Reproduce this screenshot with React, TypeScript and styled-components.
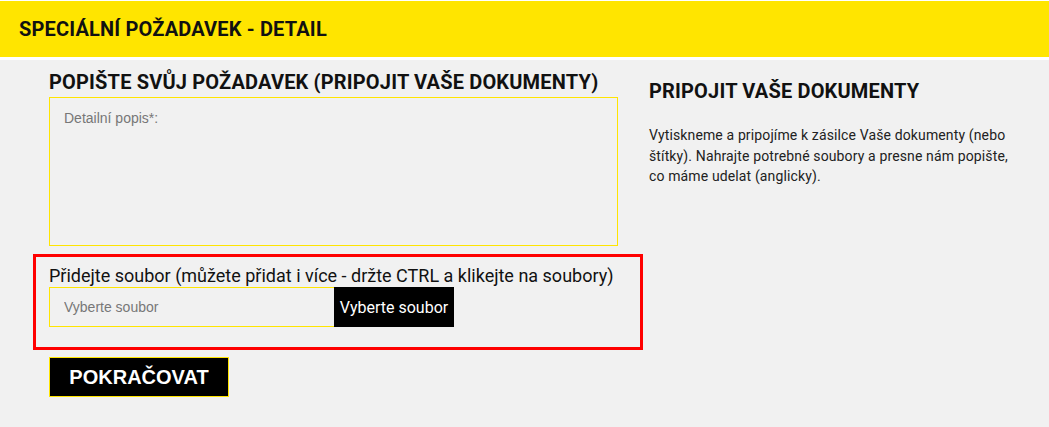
import styled, { createGlobalStyle } from "styled-components";

const GlobalStyle = createGlobalStyle`
  html, body {
    margin: 0;
    padding: 0;
    background: #ffffff;
  }
  body {
    font-family: Roboto, "Liberation Sans", sans-serif;
  }
  * {
    box-sizing: border-box;
  }
`;

const Page = styled.div`
  padding-top: 1px;
  min-height: 427px;
  display: flex;
  flex-direction: column;
`;

const TitleBar = styled.header`
  height: 56px;
  background: #ffe500;
  display: flex;
  align-items: center;
  padding-left: 19px;
  margin-bottom: 3px;

  & > h1 {
    margin: 0;
    font-size: 20px;
    font-weight: 700;
    color: #111;
    letter-spacing: 0.17px;
  }
`;

const Main = styled.main`
  flex: 1;
  background: #f1f1f1;
  display: flex;
  padding: 10px 0 30px 49px;
  gap: 31px;
`;

const LeftColumn = styled.section`
  width: 569px;
  display: flex;
  flex-direction: column;
`;

const RightColumn = styled.aside`
  width: 362px;
  padding-top: 9px;
`;

const Heading = styled.h2`
  margin: 0;
  font-size: 20px;
  line-height: 24px;
  font-weight: 700;
  color: #111;
  letter-spacing: 0.17px;
`;

const TextArea = styled.textarea`
  margin-top: 3px;
  width: 569px;
  height: 149px;
  resize: none;
  background: #f1f1f1;
  border: 1px solid #ffe500;
  padding: 12px 14px;
  font-family: "Liberation Sans", Arial, sans-serif;
  font-size: 14px;
  color: #333;
  outline: none;

  &::placeholder {
    color: #777;
  }
`;

const UploadBox = styled.div`
  margin: 8px 0 0 -16px;
  width: 610px;
  border: 3px solid #ff0000;
  padding: 9px 0 20px 13px;
`;

const UploadLabel = styled.label`
  display: block;
  font-size: 18px;
  line-height: 20px;
  color: #111;
`;

const FileRow = styled.div`
  display: flex;
  margin-top: 1px;
`;

const FileInput = styled.input`
  width: 285px;
  height: 40px;
  background: #f1f1f1;
  border: 1px solid #ffe500;
  border-right: none;
  padding: 0 14px;
  font-family: "Liberation Sans", Arial, sans-serif;
  font-size: 14px;
  outline: none;

  &::placeholder {
    color: #777;
  }
`;

const FileButton = styled.button`
  width: 120px;
  height: 40px;
  background: #000;
  color: #fff;
  border: none;
  font-family: Roboto, sans-serif;
  font-size: 16px;
  padding: 0;
`;

const SubmitButton = styled.button`
  margin-top: 7px;
  align-self: flex-start;
  width: 180px;
  height: 40px;
  background: #000;
  color: #fff;
  border: 1px solid #ffe500;
  font-family: "Liberation Sans", Arial, sans-serif;
  font-weight: 700;
  font-size: 20px;
`;

const Paragraph = styled.p`
  margin: 22px 0 0;
  font-size: 14px;
  line-height: 20.5px;
  letter-spacing: 0.13px;
  color: #222;
`;

export default function App() {
  return (
    <>
      <GlobalStyle />
      <Page>
        <TitleBar>
          <h1>SPECIÁLNÍ POŽADAVEK - DETAIL</h1>
        </TitleBar>
        <Main>
          <LeftColumn>
            <Heading>POPIŠTE SVŮJ POŽADAVEK (PRIPOJIT VAŠE DOKUMENTY)</Heading>
            <TextArea placeholder="Detailní popis*:" />
            <UploadBox>
              <UploadLabel>
                Přidejte soubor (můžete přidat i více - držte CTRL a klikejte na soubory)
              </UploadLabel>
              <FileRow>
                <FileInput placeholder="Vyberte soubor" readOnly />
                <FileButton>Vyberte soubor</FileButton>
              </FileRow>
            </UploadBox>
            <SubmitButton>POKRAČOVAT</SubmitButton>
          </LeftColumn>
          <RightColumn>
            <Heading>PRIPOJIT VAŠE DOKUMENTY</Heading>
            <Paragraph>
              Vytiskneme a pripojíme k zásilce Vaše dokumenty (nebo štítky). Nahrajte
              potrebné soubory a presne nám popište, co máme udelat (anglicky).
            </Paragraph>
          </RightColumn>
        </Main>
      </Page>
    </>
  );
}
